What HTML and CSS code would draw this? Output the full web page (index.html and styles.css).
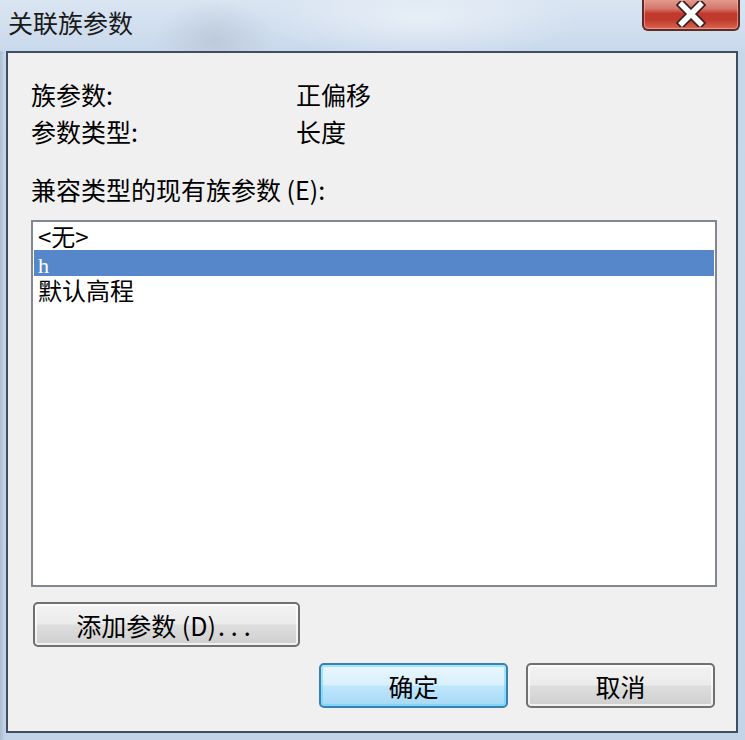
FILE: index.html
```html
<!DOCTYPE html>
<html lang="zh-CN">

<head>
    <meta charset="UTF-8">
    <meta name="viewport" content="width=device-width, initial-scale=1.0">
    <title>关联族参数</title>
    <link rel="stylesheet" href="styles.css">
</head>

<body>
    <div class="window">
        <div class="titlebar">
            <span class="title">关联族参数</span>
            <div class="close-btn">
                <svg width="30" height="26" viewBox="0 0 30 26">
                    <path d="M6 4 L24 22 M24 4 L6 22" stroke="#3a2020" stroke-width="9" stroke-linecap="square" />
                    <path d="M6 4 L24 22 M24 4 L6 22" stroke="#ffffff" stroke-width="5.5" stroke-linecap="square" />
                </svg>
            </div>
        </div>
        <div class="client">
            <div class="info">
                <span>族参数:</span><span>正偏移</span>
                <span>参数类型:</span><span>长度</span>
            </div>
            <div class="list-label">兼容类型的现有族参数 (E):</div>
            <div class="listbox">
                <div class="item">&lt;无&gt;</div>
                <div class="item selected"><span class="latin">h</span></div>
                <div class="item">默认高程</div>
            </div>
            <button type="button" class="btn btn-add">添加参数 (D)<span class="dots">...</span></button>
            <div class="dialog-buttons">
                <button type="button" class="btn btn-default">确定</button>
                <button type="button" class="btn">取消</button>
            </div>
        </div>
    </div>
</body>

</html>
```

FILE: styles.css
```css
body {
    margin: 0;
    font-family: "Noto Sans CJK SC", "Noto Sans", sans-serif;
    background: #c6d6ea;
}

.window {
    width: 745px;
    height: 740px;
    box-sizing: border-box;
    display: flex;
    flex-direction: column;
    overflow: hidden;
    background:
        linear-gradient(90deg, rgba(150, 165, 185, 0.5) 0, rgba(255, 255, 255, 0) 5px),
        linear-gradient(180deg, #d6e2f0 0, #c8d8eb 50px, #c3d4e8 100%);
}

.titlebar {
    height: 51px;
    flex-shrink: 0;
    display: flex;
    justify-content: space-between;
    align-items: flex-start;
    background:
        radial-gradient(ellipse 60px 40px at 215px 40px, rgba(160, 170, 185, 0.35), rgba(255, 255, 255, 0)),
        radial-gradient(ellipse 160px 40px at 420px 20px, rgba(255, 255, 255, 0.45), rgba(255, 255, 255, 0)),
        linear-gradient(180deg, #dae5f2 0, #c9d9ec 100%);
}

.title {
    font-size: 25px;
    line-height: 25px;
    color: #1a1a1a;
    margin: 10px 0 0 8px;
}

.close-btn {
    width: 98px;
    height: 33px;
    margin: -2px 5px 0 0;
    box-sizing: border-box;
    border: 2px solid #5e2a26;
    border-top: none;
    border-radius: 0 0 6px 6px;
    display: flex;
    justify-content: center;
    align-items: center;
    background: linear-gradient(180deg, #e6a294 0, #d3766a 35%, #c2392c 50%, #bf3a2d 70%, #d9664f 100%);
    box-shadow: inset 0 0 0 1px rgba(255, 200, 190, 0.5);
}

.client {
    flex: 1;
    margin: 0 7px 7px 6px;
    border: 2px solid #3f4d5e;
    background: #f0f0f0;
    padding: 23px 19px 0 23px;
    color: #000;
}

.info {
    display: grid;
    grid-template-columns: 265px auto;
    font-size: 25px;
    line-height: 37px;
}

.list-label {
    font-size: 25px;
    line-height: 37px;
    margin-top: 21px;
}

.listbox {
    margin-top: 12px;
    height: 367px;
    box-sizing: border-box;
    border: 2px solid #828790;
    background: #fff;
    padding: 1px 1px;
}

.item {
    height: 26px;
    font-size: 24px;
    line-height: 26px;
    padding-left: 4px;
    white-space: nowrap;
}

.item.selected {
    background: #5787cb;
    color: #fff;
    margin-top: 1px;
    margin-bottom: 1px;
}

.latin {
    font-family: "Liberation Serif", serif;
    font-size: 22px;
}

.btn {
    font-family: "Noto Sans CJK SC", "Noto Sans", sans-serif;
    font-size: 25px;
    color: #000;
    height: 45px;
    padding: 0;
    border: 2px solid #707070;
    border-radius: 5px;
    background: linear-gradient(180deg, #f3f3f3 0, #ebebeb 48%, #dddddd 52%, #cfcfcf 100%);
    box-shadow: inset 0 0 0 2px rgba(255, 255, 255, 0.7);
    cursor: pointer;
}

.btn-add {
    display: block;
    width: 267px;
    margin: 15px 0 0 2px;
}

.dots {
    letter-spacing: 6px;
    margin-left: 2px;
}

.dialog-buttons {
    display: flex;
    justify-content: flex-end;
    gap: 18px;
    margin-top: 16px;
    padding-right: 2px;
}

.dialog-buttons .btn {
    width: 189px;
}

.btn-default {
    border-color: #3c7fb1;
    background: linear-gradient(180deg, #eaf6fd 0, #d9f0fc 48%, #bee6fd 52%, #a7d9f5 100%);
    box-shadow: inset 0 0 0 2px rgba(72, 216, 251, 0.45);
}
```
